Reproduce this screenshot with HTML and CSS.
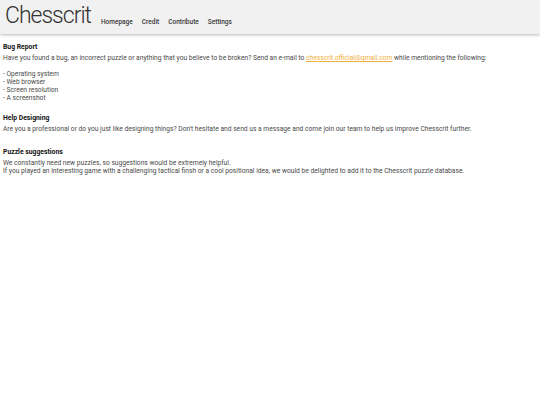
FILE: index.html
```html
<!DOCTYPE html>
<html>
<head>
<meta charset="utf-8">
<link rel="stylesheet" href="styles.css">
</head>
<body>
<header class="topbar">
  <span class="brand">Chesscrit</span>
  <nav class="nav">
    <a class="nav-link" href="#">Homepage</a>
    <a class="nav-link" href="#">Credit</a>
    <a class="nav-link" href="#">Contribute</a>
    <a class="nav-link" href="#">Settings</a>
  </nav>
</header>
<main class="content">
  <section class="block block-bug">
    <h2 class="block-title">Bug Report</h2>
    <p class="text">Have you found a bug, an incorrect puzzle or anything that you believe to be broken? Send an e-mail to <a class="mail" href="#">chesscrit.official@gmail.com</a> while mentioning the following:</p>
    <ul class="list">
      <li>- Operating system</li>
      <li>- Web browser</li>
      <li>- Screen resolution</li>
      <li>- A screenshot</li>
    </ul>
  </section>
  <section class="block block-help">
    <h2 class="block-title">Help Designing</h2>
    <p class="text">Are you a professional or do you just like designing things? Don't hesitate and send us a message and come join our team to help us improve Chesscrit further.</p>
  </section>
  <section class="block">
    <h2 class="block-title">Puzzle suggestions</h2>
    <p class="text">We constantly need new puzzles, so suggestions would be extremely helpful.<br>If you played an interesting game with a challenging tactical finsh or a cool positional idea, we would be delighted to add it to the Chesscrit puzzle database.</p>
  </section>
</main>
</body>
</html>
```

FILE: styles.css
```css
html, body {
  margin: 0;
  padding: 0;
  background: #ffffff;
  font-family: Roboto, "Liberation Sans", sans-serif;
}

.topbar {
  display: flex;
  align-items: flex-end;
  height: 34px;
  box-sizing: border-box;
  padding: 0 0 8px 5px;
  background: #f1f1f1;
  box-shadow: 0 1px 3px rgba(0, 0, 0, 0.28);
}

.brand {
  font-size: 23px;
  font-weight: 300;
  line-height: 23px;
  letter-spacing: -1px;
  color: #333333;
  margin-bottom: -1px;
}

.nav {
  display: flex;
  gap: 9px;
  margin-left: 10px;
}

.nav-link {
  font-size: 6.5px;
  font-weight: 500;
  line-height: 8px;
  color: #3a3a3a;
  text-decoration: none;
}

.content {
  padding: 9px 3px 0 3px;
}

.block {
  margin: 0;
}

.block-bug {
  margin-bottom: 12px;
}

.block-help {
  margin-bottom: 15px;
}

.block-title {
  margin: 0 0 3px 0;
  font-size: 6.8px;
  font-weight: 700;
  line-height: 8px;
  color: #111111;
}

.text {
  margin: 0;
  font-size: 6.7px;
  line-height: 8px;
  color: #4a4a4a;
}

.mail {
  color: #f0b13a;
  text-decoration: underline;
}

.list {
  list-style: none;
  margin: 8px 0 0 0;
  padding: 0;
  font-size: 6.7px;
  line-height: 8px;
  color: #4a4a4a;
}
```
